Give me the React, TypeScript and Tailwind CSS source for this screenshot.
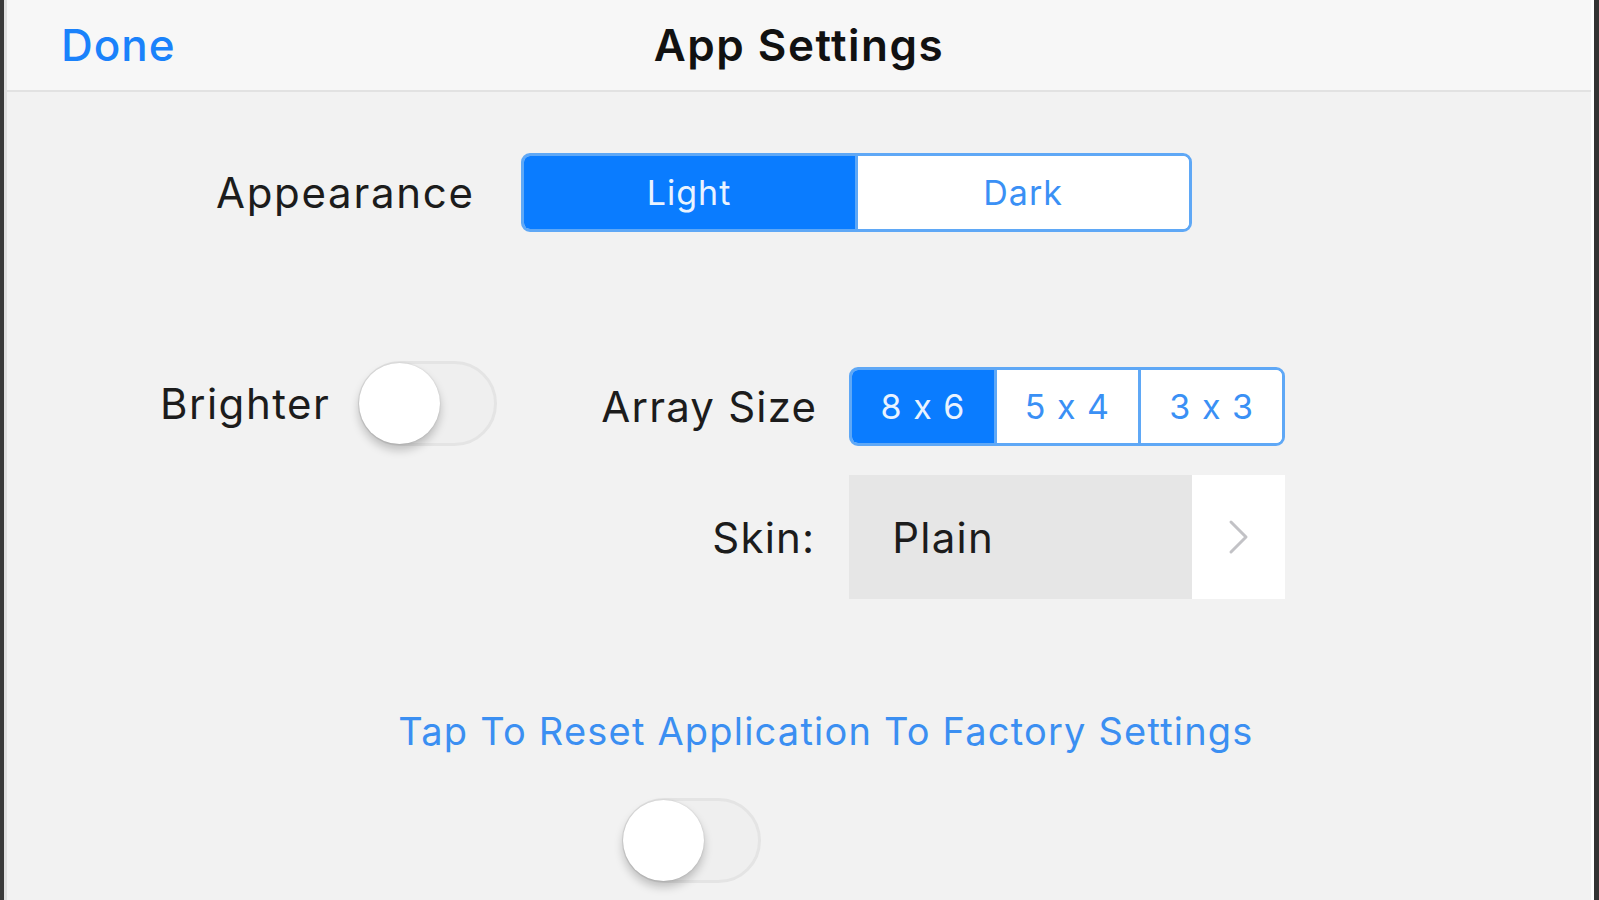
import React from "react";

const font = { fontFamily: "Inter, 'Liberation Sans', sans-serif" };

const Toggle = () => (
  <div className="relative w-[139px] h-[85px] rounded-full bg-[#efefef] border-[3px] border-[#e4e4e4]">
    <div className="absolute left-[-2px] top-[-1px] w-[81px] h-[81px] rounded-full bg-white shadow-[0_6px_10px_rgba(0,0,0,0.22),0_0_2px_rgba(0,0,0,0.15)]" />
  </div>
);

const Segmented = ({
  items,
  active,
  widths,
}: {
  items: string[];
  active: number;
  widths: string;
}) => (
  <div className={`flex h-[79px] rounded-[9px] border-[3px] border-[#5fa8f6] overflow-hidden bg-white ${widths}`}>
    {items.map((it, i) => (
      <div
        key={it}
        className={`flex-1 flex items-center justify-center text-[34px] tracking-[1px] [font-variant-ligatures:no-contextual] ${
          i === active ? "bg-[#0a7cff] text-[#e9f3ff]" : "bg-white text-[#3a90f5]"
        } ${i > 0 ? "border-l-[3px] border-[#5fa8f6]" : ""}`}
      >
        {it}
      </div>
    ))}
  </div>
);

const App = () => {
  return (
    <div className="w-[1599px] h-[900px] overflow-hidden bg-[#f2f2f2] flex" style={font}>
      <div className="w-[4px] bg-[#3a3a3a]" />
      <div className="w-[3px] bg-[#e0e0e0]" />
      <div className="flex-1 flex flex-col">
        {/* nav bar */}
        <div className="h-[92px] bg-[#f7f7f7] border-b-2 border-[#e2e2e2] relative flex items-center justify-center">
          <span className="absolute left-[54px] text-[44px] tracking-[1px] text-[#1a82fb] font-medium">Done</span>
          <span className="text-[44px] tracking-[1.5px] font-semibold text-[#111]">App Settings</span>
        </div>

        {/* appearance */}
        <div className="flex items-center mt-[61px] ml-[209px]">
          <span className="text-[42px] tracking-[1.7px] text-[#1c1c1c]">Appearance</span>
          <div className="ml-[46px]">
            <Segmented items={["Light", "Dark"]} active={0} widths="w-[671px]" />
          </div>
        </div>

        {/* brighter / array size / skin */}
        <div className="flex items-start mt-[135px] ml-[153px]">
          <div className="flex items-center h-[79px] mt-[-3px]">
            <span className="text-[42px] tracking-[1.5px] text-[#1c1c1c]">Brighter</span>
            <div className="ml-[28px]">
              <Toggle />
            </div>
          </div>
          <div className="ml-[104px] grid grid-cols-[214px_436px] gap-x-[34px] gap-y-[29px] items-center">
            <span className="text-[42px] tracking-[1.2px] text-[#1c1c1c] text-right whitespace-nowrap">Array Size</span>
            <Segmented items={["8 x 6", "5 x 4", "3 x 3"]} active={0} widths="w-[436px]" />
            <span className="text-[42px] tracking-[1.2px] text-[#1c1c1c] text-right">Skin:</span>
            <div className="flex h-[124px]">
              <div className="flex-1 bg-[#e6e6e6] flex items-center pl-[43px] text-[42px] tracking-[1.2px] text-[#1c1c1c]">Plain</div>
              <div className="w-[93px] bg-white flex items-center justify-center">
                <svg width="22" height="36" viewBox="0 0 22 36" fill="none">
                  <path d="M3 3 L18 18 L3 33" stroke="#c2c2c6" strokeWidth="3" strokeLinecap="round" strokeLinejoin="round" />
                </svg>
              </div>
            </div>
          </div>
        </div>

        {/* reset */}
        <div className="mt-[104px] flex justify-center pl-[54px]">
          <span className="text-[38px] tracking-[1.2px] text-[#3b8ff2]">Tap To Reset Application To Factory Settings</span>
        </div>
        <div className="mt-[38px] ml-[615px]">
          <Toggle />
        </div>
      </div>
      <div className="w-[3px] bg-[#ffffff]" />
      <div className="w-[5px] bg-[#333]" />
    </div>
  );
};

export default App;
